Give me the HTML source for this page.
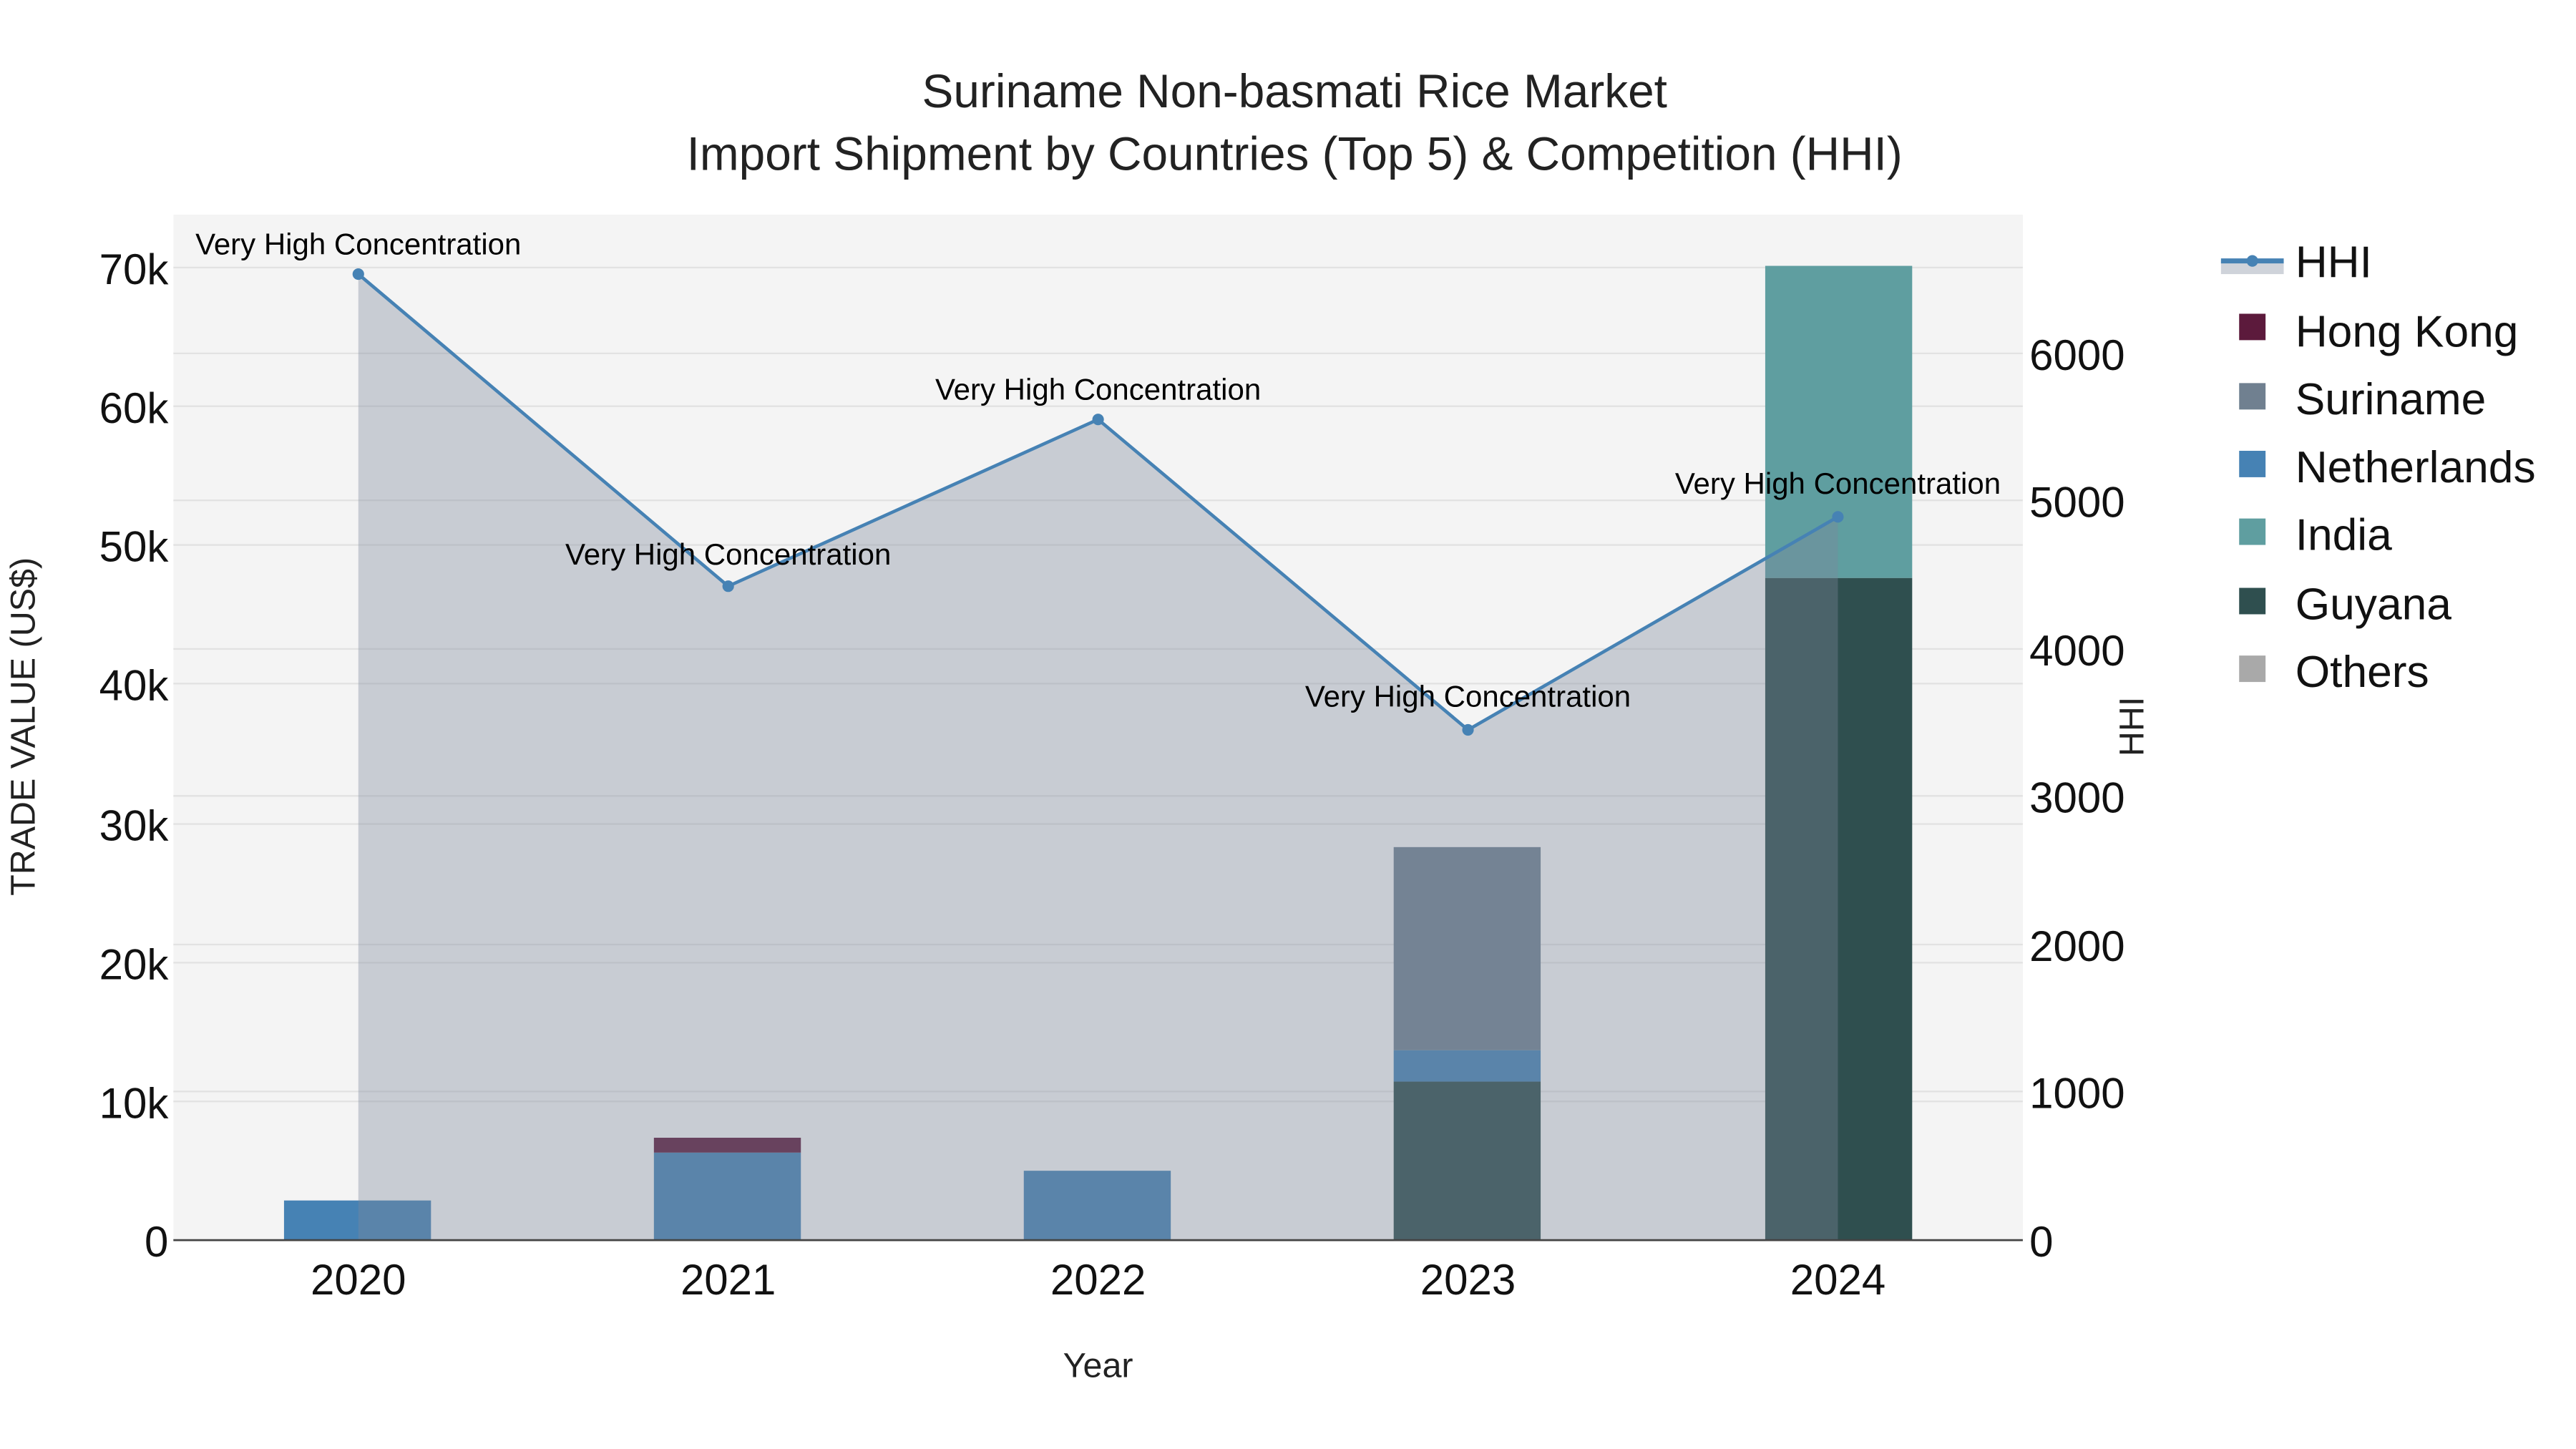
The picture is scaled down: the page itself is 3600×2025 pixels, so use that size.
<!DOCTYPE html>
<html><head><meta charset="utf-8"><style>html,body{margin:0;padding:0;background:#fff}svg{display:block}</style></head>
<body>
<svg width="3600" height="2025" viewBox="0 0 1560 877.5" xmlns="http://www.w3.org/2000/svg" font-family="Liberation Sans, Arial, sans-serif">
<rect width="1560" height="877.5" fill="#fff"/>
<rect x="105" y="130" width="1120" height="621" fill="#f4f4f4"/>
<g stroke="#e2e2e2" stroke-width="1">
<line x1="105" x2="1225" y1="162" y2="162"/><line x1="105" x2="1225" y1="246" y2="246"/><line x1="105" x2="1225" y1="330" y2="330"/><line x1="105" x2="1225" y1="414" y2="414"/><line x1="105" x2="1225" y1="499" y2="499"/><line x1="105" x2="1225" y1="583" y2="583"/><line x1="105" x2="1225" y1="667" y2="667"/>
<line x1="105" x2="1225" y1="214" y2="214"/><line x1="105" x2="1225" y1="303" y2="303"/><line x1="105" x2="1225" y1="393" y2="393"/><line x1="105" x2="1225" y1="482" y2="482"/><line x1="105" x2="1225" y1="572" y2="572"/><line x1="105" x2="1225" y1="661" y2="661"/>
</g>
<rect x="172" y="727" width="89" height="24" fill="#4682b4"/>
<rect x="396" y="698" width="89" height="53" fill="#4682b4"/>
<rect x="396" y="689" width="89" height="9" fill="#5c1a3c"/>
<rect x="620" y="709" width="89" height="42" fill="#4682b4"/>
<rect x="844" y="655" width="89" height="96" fill="#2f4f4f"/>
<rect x="844" y="636" width="89" height="19" fill="#4682b4"/>
<rect x="844" y="513" width="89" height="123" fill="#708090"/>
<rect x="1069" y="350" width="89" height="401" fill="#2f4f4f"/>
<rect x="1069" y="161" width="89" height="189" fill="#5f9ea0"/>
<path d="M217,166 L441,355 L665,254 L889,442 L1113,313 L1113,751 L217,751 Z" fill="rgba(124,135,154,0.37)"/>
<polyline points="217,166 441,355 665,254 889,442 1113,313" fill="none" stroke="#4682b4" stroke-width="2"/>
<g fill="#4682b4"><circle cx="217" cy="166" r="3.5"/><circle cx="441" cy="355" r="3.5"/><circle cx="665" cy="254" r="3.5"/><circle cx="889" cy="442" r="3.5"/><circle cx="1113" cy="313" r="3.5"/></g>
<line x1="105" x2="1225" y1="751" y2="751" stroke="#444" stroke-width="1.2"/>
<g font-size="18.2" text-anchor="middle" fill="#000">
<text x="217" y="154">Very High Concentration</text>
<text x="441" y="342">Very High Concentration</text>
<text x="665" y="242">Very High Concentration</text>
<text x="889" y="428">Very High Concentration</text>
<text x="1113" y="299">Very High Concentration</text>
</g>
<g font-size="26" text-anchor="end" fill="#111">
<text x="102" y="172">70k</text><text x="102" y="256">60k</text><text x="102" y="340">50k</text><text x="102" y="424">40k</text><text x="102" y="509">30k</text><text x="102" y="593">20k</text><text x="102" y="677">10k</text><text x="102" y="761">0</text>
</g>
<g font-size="26" text-anchor="start" fill="#111">
<text x="1229" y="224">6000</text><text x="1229" y="313">5000</text><text x="1229" y="403">4000</text><text x="1229" y="492">3000</text><text x="1229" y="582">2000</text><text x="1229" y="671">1000</text><text x="1229" y="761">0</text>
</g>
<g font-size="26" text-anchor="middle" fill="#111">
<text x="217" y="784">2020</text><text x="441" y="784">2021</text><text x="665" y="784">2022</text><text x="889" y="784">2023</text><text x="1113" y="784">2024</text>
</g>
<text x="665" y="834" font-size="21" text-anchor="middle" fill="#222">Year</text>
<text transform="translate(21,440) rotate(-90)" font-size="21" text-anchor="middle" fill="#222">TRADE VALUE (US$)</text>
<text transform="translate(1298,440) rotate(-90)" font-size="21" text-anchor="middle" fill="#222">HHI</text>
<g font-size="28.5" text-anchor="middle" fill="#222">
<text x="784" y="65">Suriname Non-basmati Rice Market</text>
<text x="784" y="103">Import Shipment by Countries (Top 5) &amp; Competition (HHI)</text>
</g>
<rect x="1345" y="158" width="38" height="8" fill="rgba(124,135,154,0.37)"/>
<line x1="1345" x2="1383" y1="158" y2="158" stroke="#4682b4" stroke-width="3"/>
<circle cx="1364" cy="158" r="3.5" fill="#4682b4"/>
<rect x="1356" y="190" width="16" height="16" fill="#5c1a3c"/>
<rect x="1356" y="232" width="16" height="16" fill="#708090"/>
<rect x="1356" y="273" width="16" height="16" fill="#4682b4"/>
<rect x="1356" y="314" width="16" height="16" fill="#5f9ea0"/>
<rect x="1356" y="356" width="16" height="16" fill="#2f4f4f"/>
<rect x="1356" y="397" width="16" height="16" fill="#a9a9a9"/>
<g font-size="27" fill="#111">
<text x="1390" y="168">HHI</text><text x="1390" y="210">Hong Kong</text><text x="1390" y="251">Suriname</text><text x="1390" y="292">Netherlands</text><text x="1390" y="333">India</text><text x="1390" y="375">Guyana</text><text x="1390" y="416">Others</text>
</g>
</svg>
</body></html>
